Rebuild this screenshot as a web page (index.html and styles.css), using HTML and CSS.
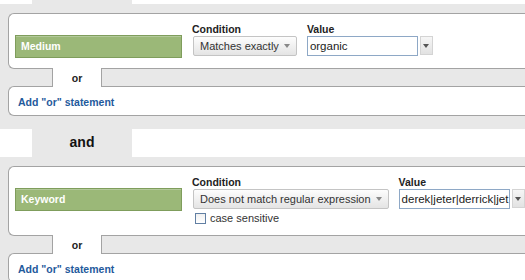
FILE: index.html
```html
<!DOCTYPE html>
<html>
<head>
<meta charset="utf-8">
<link rel="stylesheet" href="styles.css">
</head>
<body>
<div class="page">
  <div class="and-row and-row-top"><div class="and-tab"></div></div>

  <section class="group">
    <div class="cond-box">
      <div class="dim">Medium</div>
      <div class="col">
        <div class="lbl">Condition</div>
        <div class="select">Matches exactly<span class="caret"></span></div>
      </div>
      <div class="col">
        <div class="lbl">Value</div>
        <div class="val-row">
          <div class="input">organic</div>
          <div class="drop"><span class="caret dark"></span></div>
        </div>
      </div>
    </div>
    <div class="or-row"><div class="or-tab">or</div></div>
    <div class="add-box"><span class="add-link">Add "or" statement</span></div>
  </section>

  <div class="and-row"><div class="and-tab">and</div></div>

  <section class="group">
    <div class="cond-box">
      <div class="dim">Keyword</div>
      <div class="col">
        <div class="lbl">Condition</div>
        <div class="select">Does not match regular expression<span class="caret"></span></div>
        <div class="check-row"><span class="checkbox"></span><span class="check-text">case sensitive</span></div>
      </div>
      <div class="col">
        <div class="lbl">Value</div>
        <div class="val-row">
          <div class="input">derek|jeter|derrick|jet</div>
          <div class="drop"><span class="caret dark"></span></div>
        </div>
      </div>
    </div>
    <div class="or-row"><div class="or-tab">or</div></div>
    <div class="add-box"><span class="add-link">Add "or" statement</span></div>
  </section>
</div>
</body>
</html>
```
FILE: styles.css
```css
html, body {
  margin: 0;
  padding: 0;
  background: #fff;
  overflow: hidden;
}
body {
  font-family: "Liberation Sans", Arial, sans-serif;
  color: #222;
}
.page {
  width: 560px;
}
.and-row {
  height: 28px;
  display: flex;
  padding-left: 32px;
}
.and-row-top {
  height: 4px;
}
.and-tab {
  box-sizing: border-box;
  width: 100px;
  padding-bottom: 3px;
  background: #e8e8e8;
  display: flex;
  align-items: center;
  justify-content: center;
  font-weight: bold;
  font-size: 14px;
  color: #111;
}
.group {
  background: #e8e8e8;
  padding: 9px 0 13px 8px;
}
.cond-box {
  background: #fff;
  border: 1px solid #a3a3a3;
  border-right: none;
  border-radius: 6px 0 0 6px;
  padding: 10px 0 10px 6px;
  display: flex;
  align-items: flex-start;
}
.dim {
  box-sizing: border-box;
  width: 167px;
  height: 23px;
  margin-top: 11px;
  background: #9bb878;
  border: 1px solid #7f9d5c;
  box-shadow: inset 0 1px 0 #b3c99a;
  color: #fff;
  font-weight: bold;
  font-size: 10.5px;
  line-height: 21px;
  padding-left: 5px;
}
.col {
  margin-left: 10px;
  display: flex;
  flex-direction: column;
  align-items: flex-start;
}
.lbl {
  font-weight: bold;
  font-size: 10.5px;
  line-height: 11px;
  margin-bottom: 1px;
  color: #222;
}
.select {
  box-sizing: border-box;
  height: 20px;
  margin-left: 1px;
  display: inline-flex;
  align-items: center;
  padding: 0 6px 0 6px;
  border: 1px solid #c4c4c4;
  border-radius: 2px;
  background: linear-gradient(#fdfdfd, #e4e4e4);
  font-size: 11px;
  color: #333;
  white-space: nowrap;
}
.caret {
  display: inline-block;
  width: 0;
  height: 0;
  margin-left: 5px;
  border-left: 3px solid transparent;
  border-right: 3px solid transparent;
  border-top: 4px solid #888;
}
.caret.dark {
  margin-left: 0;
  border-top-color: #555;
}
.val-row {
  display: flex;
  align-items: flex-start;
}
.input {
  box-sizing: border-box;
  width: 111px;
  height: 20px;
  border: 1px solid #8ea8c6;
  background: #fff;
  font-size: 11.5px;
  line-height: 18px;
  padding-left: 2px;
  color: #222;
  white-space: nowrap;
  overflow: hidden;
}
.drop {
  box-sizing: border-box;
  width: 13px;
  height: 19px;
  margin-left: 2px;
  border: 1px solid #d4d4d4;
  background: linear-gradient(#f6f6f6, #e2e2e2);
  display: flex;
  align-items: center;
  justify-content: center;
}
.check-row {
  margin-top: 2px;
  height: 14px;
  display: flex;
  align-items: center;
  padding-left: 3px;
}
.checkbox {
  box-sizing: border-box;
  width: 11px;
  height: 11px;
  border: 1px solid #617fa3;
  background: linear-gradient(#f0f0f0, #fff);
}
.check-text {
  margin-left: 4px;
  font-size: 11px;
  color: #333;
}
.or-row {
  display: flex;
  height: 19px;
  margin: -1px 0;
  padding-left: 44px;
}
.or-tab {
  box-sizing: border-box;
  width: 50px;
  position: relative;
  z-index: 1;
  background: #fff;
  border-left: 1px solid #a3a3a3;
  border-right: 1px solid #a3a3a3;
  display: flex;
  align-items: center;
  justify-content: center;
  font-weight: bold;
  font-size: 10.5px;
  color: #222;
}
.add-box {
  background: #fff;
  border: 1px solid #a3a3a3;
  border-right: none;
  border-radius: 6px 0 0 6px;
  padding: 7px 0 6px 9px;
  line-height: 13px;
}
.add-link {
  font-weight: bold;
  font-size: 10.5px;
  color: #1f5a9c;
}
```
